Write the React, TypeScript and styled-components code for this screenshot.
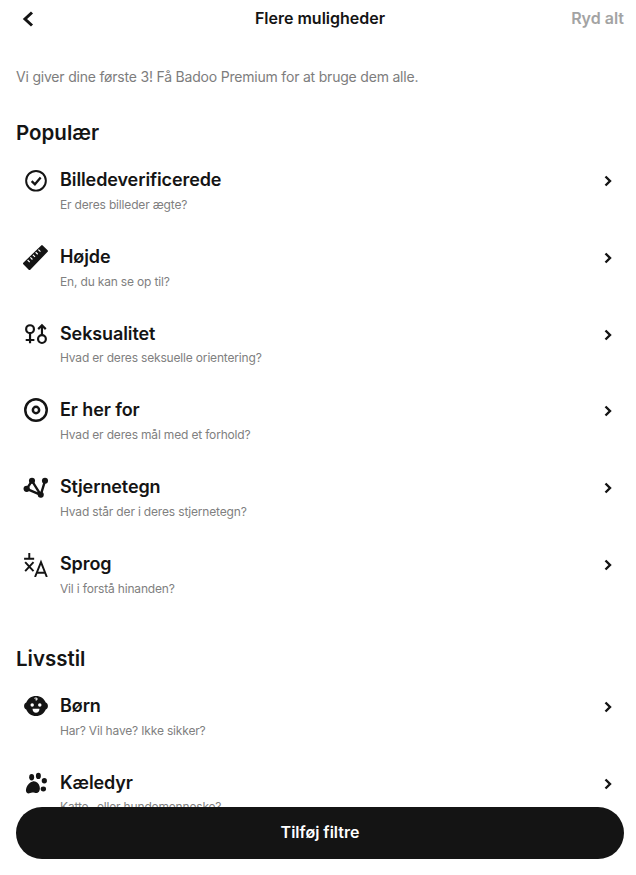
import styled, { createGlobalStyle } from 'styled-components';

const GlobalStyle = createGlobalStyle`
  html, body {
    margin: 0;
    height: 100%;
    background: #fff;
    overflow: hidden;
  }
  #root {
    height: 100%;
  }
`;

const Screen = styled.div`
  position: relative;
  height: 875px;
  overflow: hidden;
  font-family: Inter, 'Liberation Sans', sans-serif;
  color: #141414;
`;

const Header = styled.header`
  display: grid;
  grid-template-columns: 1fr auto 1fr;
  align-items: center;
  height: 36px;
  padding: 0 12px 0 16px;
`;

const BackButton = styled.div`
  display: flex;
  align-items: center;
`;

const HeaderTitle = styled.div`
  font-size: 16px;
  font-weight: 600;
`;

const ClearAll = styled.div`
  justify-self: end;
  font-size: 16px;
  font-weight: 600;
  color: #a3a3a3;
`;

const Intro = styled.p`
  margin: 30px 16px 0;
  font-size: 14px;
  line-height: 22px;
  letter-spacing: -0.2px;
  color: #7d7d7d;
`;

const SectionTitle = styled.h2<{ $top: number }>`
  margin: ${p => p.$top}px 16px 0;
  font-size: 20.5px;
  line-height: 28px;
  font-weight: 600;
`;

const List = styled.div`
  display: flex;
  flex-direction: column;
  margin-top: 5px;
`;

const Row = styled.div`
  display: grid;
  grid-template-columns: 40px 1fr 24px;
  column-gap: 4px;
  height: 76.8px;
  padding: 0 16px;
`;

const RowIcon = styled.div`
  display: flex;
  justify-content: center;
  padding-top: 15px;
`;

const RowText = styled.div`
  display: flex;
  flex-direction: column;
  padding-top: 15px;
`;

const RowTitle = styled.div`
  font-size: 18px;
  line-height: 26px;
  font-weight: 600;
  letter-spacing: -0.1px;
`;

const RowSub = styled.div`
  margin-top: 2.8px;
  font-size: 12px;
  line-height: 18px;
  letter-spacing: -0.17px;
  color: #808080;
`;

const RowChevron = styled.div`
  display: flex;
  align-items: flex-start;
  padding-top: 17px;
`;

const PrimaryButton = styled.button`
  position: absolute;
  left: 16px;
  right: 12px;
  top: 807px;
  height: 52px;
  padding: 0 0 2px;
  border: 0;
  border-radius: 26px;
  background: #141414;
  color: #fff;
  font-family: inherit;
  font-size: 16px;
  font-weight: 600;
`;

const iconProps = {
  width: 26,
  height: 26,
  viewBox: '0 0 24 24',
  fill: 'none',
  stroke: '#141414',
  strokeWidth: 2,
};

const Verified = () => (
  <svg {...iconProps}>
    <circle cx="12" cy="12.7" r="9.100" strokeWidth={1.8} />
    <path d="M8 13l3 3 5.300-6.300" strokeWidth={2.1} />
  </svg>
);

const Ruler = () => (
  <svg {...iconProps} stroke="none">
    <path d="M17.500 2L22 6.500 6 23l-5-5z" fill="#141414" stroke="#141414" strokeLinejoin="round" />
    <path
      d="M4.300 14.800l1.900 1.900M6.800 12.400l1.900 1.900M9.200 10l1.900 1.900M11.700 7.600l1.900 1.900M14.200 5.200l1.900 1.900"
      stroke="#fff"
      strokeWidth={1.1}
    />
  </svg>
);

const Genders = () => (
  <svg {...iconProps}>
    <circle cx="6.500" cy="7.500" r="3.600" />
    <path d="M6.500 11v9.500M2.500 17.500h8" />
    <circle cx="17.500" cy="16.700" r="3.600" />
    <path d="M17.500 13V4M14 7.500L17.500 4 21 7.500" />
  </svg>
);

const Target = () => (
  <svg {...iconProps} strokeWidth={2.3}>
    <circle cx="12" cy="12" r="9.900" />
    <circle cx="12" cy="12" r="2.900" />
  </svg>
);

const Constellation = () => (
  <svg {...iconProps} strokeWidth={2.2}>
    <path d="M3.400 13.700L8.300 6.300 16.400 19.200 20.300 6.300M3.400 13.700l13 5.500" />
    <g fill="#141414" stroke="none">
      <circle cx="8.300" cy="6.300" r="2.800" />
      <circle cx="3.400" cy="13.700" r="2.900" />
      <circle cx="16.400" cy="19.200" r="2.800" />
      <circle cx="20.300" cy="6.300" r="2.800" />
    </g>
  </svg>
);

const Translate = () => (
  <svg {...iconProps} strokeWidth={1.8}>
    <path d="M1 7.100h9.300M5.800 1.800v5.300M2 10.200l7.700 8.300M9.700 10.200L2 18.500" />
    <path d="M11.100 24l5.500-13.800L22 24M12.700 20h7.800" />
  </svg>
);

const Baby = () => (
  <svg {...iconProps} stroke="none">
    <path
      fill="#141414"
      d="M12 2.800c4.200 0 7.700 2.500 9 6 1.200.4 2 1.600 2 3.200s-.8 2.800-2 3.200c-1.300 3.500-4.800 6-9 6s-7.700-2.500-9-6c-1.200-.4-2-1.600-2-3.200s.8-2.800 2-3.200c1.300-3.500 4.800-6 9-6z"
    />
    <circle cx="8.500" cy="11" r="1.600" fill="#fff" />
    <circle cx="15.500" cy="11" r="1.600" fill="#fff" />
    <path d="M8.800 14.500h6.400c0 2.200-1.400 3.800-3.200 3.800s-3.200-1.600-3.200-3.800z" fill="#fff" />
    <path d="M10.500 5c1-.8 2.500-.5 2.500.6 0 .8-1 1-1.500.5" fill="none" stroke="#fff" strokeWidth={1} />
  </svg>
);

const Paw = () => (
  <svg {...iconProps} stroke="none" fill="#141414">
    <ellipse cx="8" cy="6.700" rx="2.300" ry="2.900" />
    <ellipse cx="14.200" cy="5.500" rx="2.300" ry="2.900" />
    <ellipse cx="19.700" cy="9.900" rx="2.400" ry="2.500" />
    <ellipse cx="18.800" cy="17.500" rx="2.500" ry="2.300" />
    <path d="M9 10.500c2.800-.8 5.500 1.500 6.300 4.500.7 2.500.2 5-1.800 6-1.800.8-3-.5-5-.2-2 .3-3.500 1.500-5 .2-1.200-1.200-.8-3-.2-5 .8-2.500 3-5 5.700-5.500z" />
  </svg>
);

const Chevron = () => (
  <svg width="24" height="24" viewBox="0 0 24 24" fill="none" stroke="#141414" strokeWidth={2.4}>
    <path d="M9.500 7.500l4.500 4.500-4.500 4.500" />
  </svg>
);

const BackIcon = () => (
  <svg width="24" height="24" viewBox="0 0 24 24" fill="none" stroke="#141414" strokeWidth={3}>
    <path d="M16 6.500L9 13l7 6.500" />
  </svg>
);

const popular = [
  { icon: <Verified />, title: 'Billedeverificerede', sub: 'Er deres billeder ægte?' },
  { icon: <Ruler />, title: 'Højde', sub: 'En, du kan se op til?' },
  { icon: <Genders />, title: 'Seksualitet', sub: 'Hvad er deres seksuelle orientering?' },
  { icon: <Target />, title: 'Er her for', sub: 'Hvad er deres mål med et forhold?' },
  { icon: <Constellation />, title: 'Stjernetegn', sub: 'Hvad står der i deres stjernetegn?' },
  { icon: <Translate />, title: 'Sprog', sub: 'Vil i forstå hinanden?' },
];

const lifestyle = [
  { icon: <Baby />, title: 'Børn', sub: 'Har? Vil have? Ikke sikker?' },
  { icon: <Paw />, title: 'Kæledyr', sub: 'Katte- eller hundemenneske?' },
];

function FilterList({ items }: { items: typeof popular }) {
  return (
    <List>
      {items.map(item => (
        <Row key={item.title}>
          <RowIcon>{item.icon}</RowIcon>
          <RowText>
            <RowTitle>{item.title}</RowTitle>
            <RowSub>{item.sub}</RowSub>
          </RowText>
          <RowChevron>
            <Chevron />
          </RowChevron>
        </Row>
      ))}
    </List>
  );
}

export default function App() {
  return (
    <Screen>
      <GlobalStyle />
      <Header>
        <BackButton>
          <BackIcon />
        </BackButton>
        <HeaderTitle>Flere muligheder</HeaderTitle>
        <ClearAll>Ryd alt</ClearAll>
      </Header>
      <Intro>Vi giver dine første 3! Få Badoo Premium for at bruge dem alle.</Intro>
      <SectionTitle $top={31}>Populær</SectionTitle>
      <FilterList items={popular} />
      <SectionTitle $top={32}>Livsstil</SectionTitle>
      <FilterList items={lifestyle} />
      <PrimaryButton>Tilføj filtre</PrimaryButton>
    </Screen>
  );
}
